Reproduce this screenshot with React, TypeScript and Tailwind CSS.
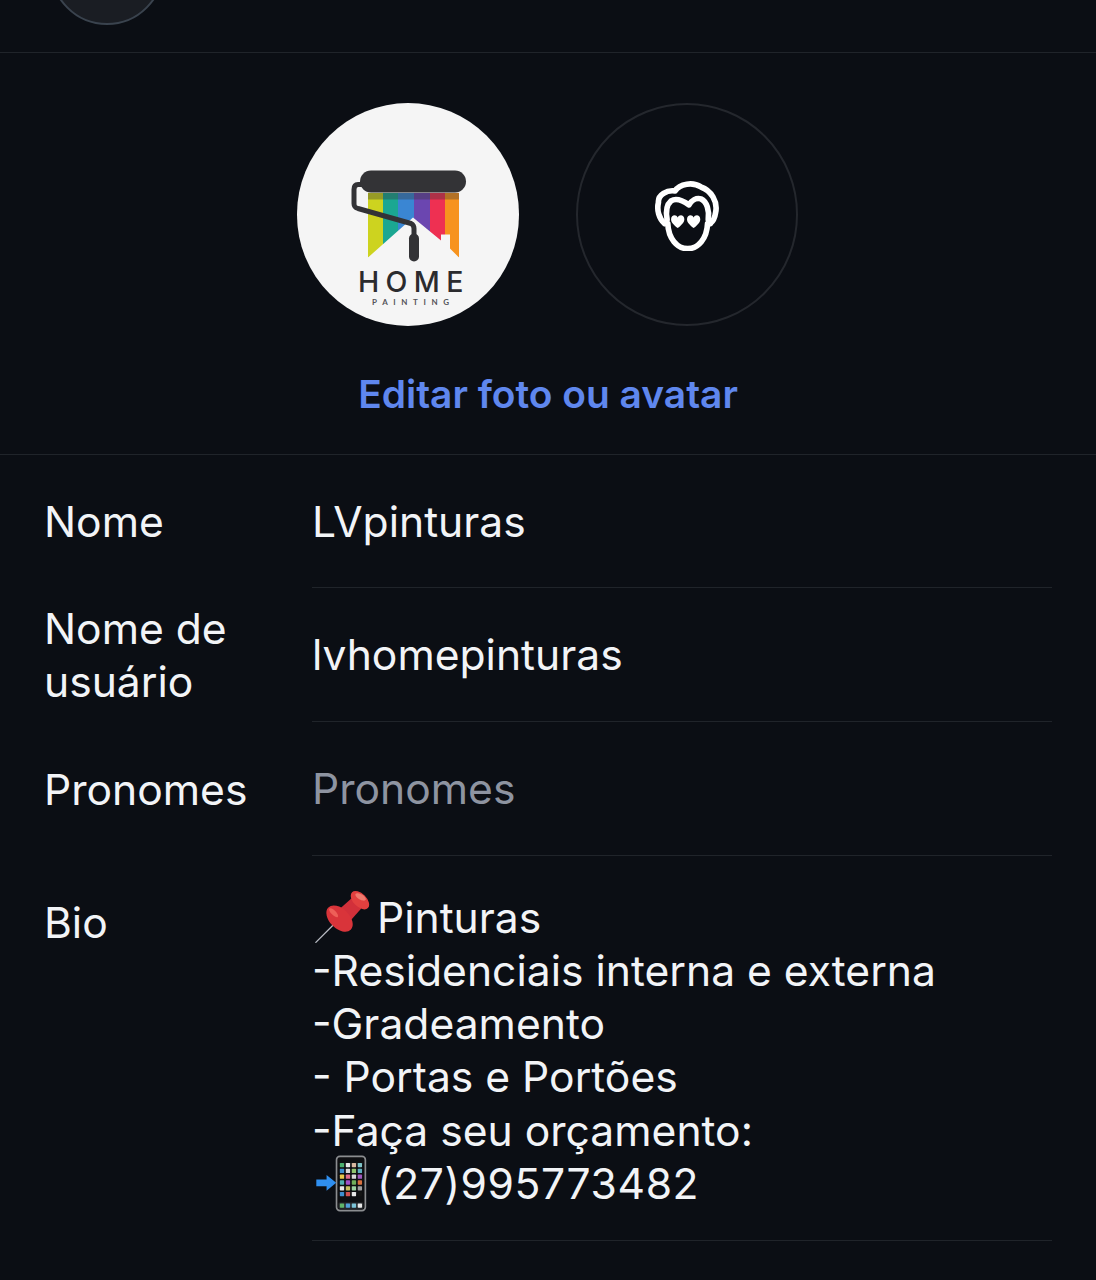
const font = "font-['Inter','Noto_Sans',sans-serif]";

const appColors = [
  ['#4caf6e', '#e8e8e8', '#d9b8a0', '#7fc4c9'],
  ['#3f8fd0', '#d8d8d8', '#8fc46e', '#5fb0c0'],
  ['#e9c84a', '#e06a8a', '#d8d8d8', '#a05ac0'],
  ['#4fb0b0', '#a050c8', '#6fae5a', '#d9713f'],
  ['#e8e8e8', '#c8c060', '#9ad0a0', '#a0a0a0'],
  ['#3f8fd0', '#d05050', '#e8e8e8', '#141414'],
];

function PinEmoji() {
  return (
    <svg viewBox="45 25 175 170" className="w-[58px] h-[56px] shrink-0 -mt-[3px] ml-[2px]">
      <path d="M50 190L118 122" stroke="#b9bcc4" strokeWidth="4" strokeLinecap="round" />
      <path d="M112 98L168 48L196 78L146 134Z" fill="#d2303a" />
      <ellipse cx="122" cy="118" rx="48" ry="30" transform="rotate(45 122 118)" fill="#d9343a" />
      <ellipse cx="184" cy="62" rx="34" ry="20" transform="rotate(45 184 62)" fill="#e2403f" />
      <ellipse cx="186" cy="52" rx="18" ry="8" transform="rotate(30 186 52)" fill="#f07a6e" />
      <ellipse cx="104" cy="100" rx="18" ry="7" transform="rotate(45 104 100)" fill="#ee5f58" />
    </svg>
  );
}

function PhoneEmoji() {
  return (
    <svg viewBox="50 28 155 172" className="w-[52px] h-[57px] shrink-0 ml-[3px]">
      <rect x="114" y="32" width="87" height="164" rx="10" fill="#0e0f12" stroke="#8b8d90" strokeWidth="5" />
      {appColors.map((row, r) =>
        row.map((color, c) => (
          <rect key={`${r}-${c}`} x={124 + c * 18} y={52 + r * 17.5} width="13" height="13" rx="2" fill={color} />
        ))
      )}
      <rect x="120" y="171" width="75" height="19" rx="4" fill="#2a2d30" />
      {['#5fb56a', '#4f9fd8', '#7cc4d8', '#e8e8e8'].map((color, i) => (
        <rect key={color} x={124 + i * 18} y="174" width="13" height="13" rx="2" fill={color} />
      ))}
      <path d="M53 102H84V88L113 112L84 136V122H53Z" fill="#2f8ff0" />
    </svg>
  );
}

function FaceIcon() {
  return (
    <svg viewBox="45 25 198 220" className="w-[66px] h-[73px]" fill="none" stroke="white" strokeWidth="17" strokeLinejoin="round" strokeLinecap="round">
      <path d="M76 162C60 148 52 122 58 98C56 76 84 60 108 64C122 42 162 36 186 52C216 62 238 96 230 130C228 144 222 156 214 162" />
      <path d="M84 150C80 128 82 106 96 94C112 84 130 92 150 106C158 92 172 84 186 88C204 96 212 124 208 150" />
      <path d="M78 162H86C88 208 114 238 146 238C178 238 204 208 206 162H214" />
      <path d="M116 176C103 165 96 158 96 149C96 135 112 133 116 144C120 133 136 135 136 149C136 158 129 165 116 176Z" fill="white" stroke="none" />
      <path d="M164 176C151 165 144 158 144 149C144 135 160 133 164 144C168 133 184 135 184 149C184 158 177 165 164 176Z" fill="white" stroke="none" />
    </svg>
  );
}

function HomeLogo() {
  const stripes = [
    { x: 71, w: 15, color: '#cdd31f' },
    { x: 86, w: 15, color: '#1ba792' },
    { x: 101, w: 16, color: '#3a86d3' },
    { x: 117, w: 16, color: '#6b46b0' },
    { x: 133, w: 15, color: '#ee3052' },
    { x: 148, w: 14, color: '#f7931e' },
  ];
  return (
    <svg viewBox="0 0 222 222" className="w-full h-full">
      <defs>
        <clipPath id="house">
          <path d="M71 89H162V154L153 145V131H144V137L116 114L71 154Z" />
        </clipPath>
      </defs>
      <g clipPath="url(#house)">
        {stripes.map((s) => (
          <rect key={s.x} x={s.x} y="89" width={s.w} height="66" fill={s.color} />
        ))}
        <rect x="71" y="89" width="91" height="7" fill="#333" opacity="0.35" />
      </g>
      <path d="M65 81H61C58 81 57 83 57 86V100C57 103 58 104 61 105L114 120C116 121 117 122 117 125V131" fill="none" stroke="#333336" strokeWidth="5" strokeLinejoin="round" />
      <rect x="63" y="67" width="106" height="22" rx="11" fill="#333336" />
      <rect x="112" y="130" width="10" height="28" rx="5" fill="#333336" />
      <text x="61" y="188" fontFamily="Inter, sans-serif" fontSize="28.5" fontWeight="500" letterSpacing="6.4" fill="#2b2b2e">HOME</text>
      <text x="75" y="201" fontFamily="Lato, sans-serif" fontSize="8" fontWeight="700" letterSpacing="5.6" fill="#55555a">PAINTING</text>
    </svg>
  );
}

export default function App() {
  return (
    <div className={`w-[1096px] h-[1280px] overflow-hidden bg-[#0b0e14] text-[#f2f4f7] text-[42.6px] leading-[53px] ${font}`}>
      {/* Top bar */}
      <div className="h-[53px] border-b border-[#20242a] overflow-hidden pl-[50px]">
        <div className="w-[114px] h-[114px] -mt-[89px] rounded-full bg-[#1a1d23] border-2 border-[#3a434e]" />
      </div>

      {/* Avatars */}
      <div className="h-[402px] border-b border-[#20242a] flex flex-col items-center">
        <div className="flex gap-[57px] pt-[50px] pr-px">
          <div className="w-[222px] h-[223px] rounded-full bg-[#f5f5f5] overflow-hidden">
            <HomeLogo />
          </div>
          <div className="w-[222px] h-[223px] rounded-full border-2 border-[#24272d] flex items-center justify-center">
            <FaceIcon />
          </div>
        </div>
        <div className="mt-[43px] text-[38.9px] leading-[50px] font-semibold text-[#5f87ee]">Editar foto ou avatar</div>
      </div>

      {/* Form */}
      <div className="flex h-[133px] items-center">
        <div className="w-[312px] pl-[44px] shrink-0">Nome</div>
        <div className="flex-1 mr-[44px] h-full flex items-center border-b border-[#20242a]">LVpinturas</div>
      </div>
      <div className="flex h-[134px] items-center">
        <div className="w-[312px] pl-[44px] pr-[40px] shrink-0">Nome de usuário</div>
        <div className="flex-1 mr-[44px] h-full flex items-center border-b border-[#20242a]">lvhomepinturas</div>
      </div>
      <div className="flex h-[134px] items-center">
        <div className="w-[312px] pl-[44px] shrink-0">Pronomes</div>
        <div className="flex-1 mr-[44px] h-full flex items-center border-b border-[#20242a] text-[#8e94a1]">Pronomes</div>
      </div>
      <div className="flex">
        <div className="w-[312px] pl-[44px] pt-[40px] shrink-0">Bio</div>
        <div className="flex-1 mr-[44px] h-[385px] pt-[35px] border-b border-[#20242a] leading-[53.2px]">
          <div className="flex items-center h-[53px]"><PinEmoji /><span className="ml-[5px]">Pinturas</span></div>
          <div>-Residenciais interna e externa</div>
          <div>-Gradeamento</div>
          <div>- Portas e Portões</div>
          <div>-Faça seu orçamento:</div>
          <div className="flex items-center h-[53px]"><PhoneEmoji /><span className="ml-[10px] tracking-[0.6px]">(27)995773482</span></div>
        </div>
      </div>
    </div>
  );
}
